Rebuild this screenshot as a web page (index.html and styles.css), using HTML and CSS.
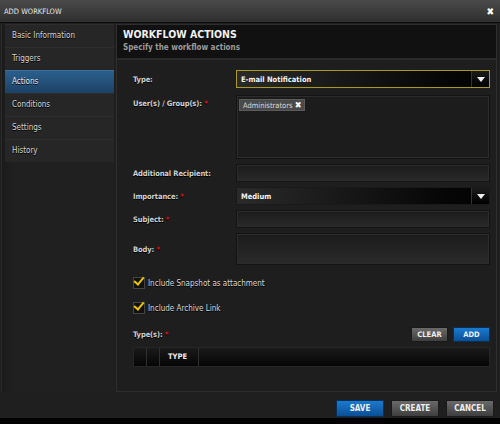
FILE: index.html
```html
<!DOCTYPE html>
<html>
<head>
  <link rel="stylesheet" href="styles.css">
</head>
<body>
  <div class="window">
    <div class="titlebar">
      <span>ADD WORKFLOW</span>
      <span class="close">&#10006;</span>
    </div>

    <div class="body">
      <ul class="nav">
        <li>Basic Information</li>
        <li>Triggers</li>
        <li class="active">Actions</li>
        <li>Conditions</li>
        <li>Settings</li>
        <li>History</li>
      </ul>

      <div class="panel">
        <div class="panel-head">
          <h2>WORKFLOW ACTIONS</h2>
          <p>Specify the workflow actions</p>
        </div>

        <div class="form">
          <div class="row first">
            <label>Type:</label>
            <div class="select focus"><span>E-mail Notification</span><b class="arrow"></b></div>
          </div>
          <div class="row top">
            <label>User(s) / Group(s): <i>*</i></label>
            <div class="field tall">
              <span class="tag">Administrators <b>&#10006;</b></span>
            </div>
          </div>
          <div class="row">
            <label>Additional Recipient:</label>
            <div class="field"></div>
          </div>
          <div class="row">
            <label>Importance: <i>*</i></label>
            <div class="select"><span>Medium</span><b class="arrow"></b></div>
          </div>
          <div class="row">
            <label>Subject: <i>*</i></label>
            <div class="field"></div>
          </div>
          <div class="row">
            <label>Body: <i>*</i></label>
            <div class="field body-field"></div>
          </div>

          <div class="check"><span class="box"></span>Include Snapshot as attachment</div>
          <div class="check"><span class="box"></span>Include Archive Link</div>

          <div class="types-head">
            <label>Type(s): <i>*</i></label>
            <button class="btn">CLEAR</button>
            <button class="btn blue">ADD</button>
          </div>
          <div class="grid-head">
            <span class="c1"></span>
            <span class="c2"></span>
            <span class="c3">TYPE</span>
            <span class="c4"></span>
          </div>
        </div>
      </div>
    </div>

    <div class="footer">
      <button class="btn big blue">SAVE</button>
      <button class="btn big">CREATE</button>
      <button class="btn big">CANCEL</button>
    </div>
  </div>
</body>
</html>
```

FILE: styles.css
```css
body {
  margin: 0;
  padding: 0;
  background: #000;
  font-family: "DejaVu Sans Condensed", "Liberation Sans", sans-serif;
  font-size: 8px;
  color: #ddd;
}

.window {
  width: 500px;
  height: 418px;
  display: flex;
  flex-direction: column;
  background: #1f1f1f;
}

.titlebar {
  height: 22px;
  display: flex;
  align-items: center;
  justify-content: space-between;
  padding: 0 6px 0 4px;
  background: linear-gradient(#4a4a4a, #2f2f2f);
  border-bottom: 1px solid #0c0c0c;
  color: #e6e6e6;
  font-size: 7.5px;
}

.close {
  color: #fff;
  font-size: 10px;
  font-weight: bold;
}

.body {
  display: flex;
  padding: 1px 3px 0 1px;
  height: 368px;
}

.nav {
  list-style: none;
  margin: 0;
  padding: 0 0 0 3px;
  width: 109px;
  border-left: 1px solid #2a2a2a;
  background: linear-gradient(90deg, #1b1b1b, #202020 12px);
}

.nav li {
  height: 22px;
  line-height: 22px;
  padding-left: 7px;
  background: #262626;
  border-top: 1px solid #2e2e2e;
  color: #d4d4d4;
  text-shadow: 0 1px 0 #000;
}

.nav li.active {
  background: linear-gradient(#2b5f8c, #1c4166);
  border-top-color: #3a6d99;
  color: #e8e8e8;
}

.panel {
  flex: 1;
  margin-left: 2px;
  border: 1px solid #2e2e2e;
  background: #1e1e1e;
  display: flex;
  flex-direction: column;
}

.panel-head {
  height: 30px;
  background: #111;
  padding: 3px 6px 0;
  border-bottom: 2px solid #2a2a2a;
}

.panel-head h2 {
  margin: 0;
  font-size: 10.5px;
  line-height: 12px;
  color: #f0f0f0;
}

.panel-head p {
  margin: 3px 0 0;
  font-size: 8px;
  font-weight: bold;
  color: #9a9a9a;
}

.form {
  padding: 10px 6px 0 16px;
}

.row {
  display: flex;
  align-items: center;
  margin-bottom: 5px;
}

.row.first {
  margin-bottom: 7px;
}

.row.top {
  align-items: flex-start;
}

.row.top label {
  padding-top: 4px;
}

.row label, .types-head label {
  width: 103px;
  font-size: 7.5px;
  letter-spacing: -0.1px;
  font-weight: bold;
  color: #d0d0d0;
  text-shadow: 0 1px 0 #000;
}

i {
  font-style: normal;
  color: #e01010;
}

.field, .select {
  flex: 1;
  height: 16px;
  border: 1px solid #131313;
  box-shadow: inset 0 0 0 1px #2c2c2c;
  background: linear-gradient(#1b1b1b, #2a2a2a);
}

.field.tall {
  box-sizing: border-box;
  height: 64px;
  padding: 3px 2px;
  background: #1c1c1c;
}

.field.body-field {
  height: 30px;
}

.select {
  display: flex;
  align-items: center;
  padding-left: 4px;
  background: linear-gradient(90deg, #2a2a2a, #050505 85%);
  box-shadow: none;
  border-color: #1a1a1a;
  font-size: 7.5px;
  font-weight: bold;
  color: #f2f2f2;
}

.select span {
  flex: 1;
}

.select.focus {
  border: 1px solid #a89a1e;
}

.arrow {
  width: 17px;
  height: 100%;
  border-left: 1px solid #333;
  background: linear-gradient(#1c1c1c, #000);
  position: relative;
}

.arrow::after {
  content: "";
  position: absolute;
  left: 5px;
  top: 6px;
  border-left: 4px solid transparent;
  border-right: 4px solid transparent;
  border-top: 5px solid #eee;
}

.tag {
  display: inline-block;
  background: #4a4a4a;
  border: 1px solid #5a5a5a;
  color: #d8d8d8;
  padding: 0 3px;
  height: 10px;
  line-height: 10px;
  font-size: 7.5px;
}

.tag b {
  color: #fff;
  font-size: 9px;
}

.check {
  display: flex;
  align-items: center;
  height: 14px;
  margin: 11px 0 0;
  color: #d8d8d8;
  text-shadow: 0 1px 0 #000;
}

.box {
  width: 10px;
  height: 10px;
  margin-right: 3px;
  background: #111;
  border: 1px solid #444;
  position: relative;
}

.box::after {
  content: "";
  position: absolute;
  left: 2px;
  top: -3px;
  width: 4px;
  height: 8px;
  border-right: 2px solid #e8c400;
  border-bottom: 2px solid #e8c400;
  transform: rotate(40deg);
}

.types-head {
  display: flex;
  align-items: center;
  margin-top: 12px;
}

.types-head label {
  flex: 1;
}

.btn {
  width: 37px;
  height: 15px;
  margin-left: 5px;
  padding: 0;
  border: 1px solid #1a1a1a;
  background: linear-gradient(#6a6a6a, #3e3e3e);
  color: #eee;
  font-family: "DejaVu Sans Condensed", "Liberation Sans", sans-serif;
  font-size: 7.5px;
  font-weight: bold;
}

.btn.blue {
  background: linear-gradient(#1a7ad0, #0b4f95);
  border-color: #0a2f55;
}

.grid-head {
  display: flex;
  height: 18px;
  margin-top: 5px;
  background: linear-gradient(#1a1a1a, #050505);
  border: 1px solid #262626;
  font-size: 7.5px;
  font-weight: bold;
  color: #eee;
}

.grid-head span {
  border-right: 1px solid #2e2e2e;
  line-height: 18px;
}

.grid-head .c1, .grid-head .c2 {
  width: 12px;
}

.grid-head .c3 {
  width: 30px;
  padding-left: 8px;
}

.grid-head .c4 {
  flex: 1;
  border-right: none;
}

.footer {
  display: flex;
  justify-content: flex-end;
  align-items: center;
  padding: 6px 6px 0 0;
  height: 20px;
}

.btn.big {
  width: 48px;
  height: 17px;
  margin-left: 7px;
  font-size: 8px;
}
```
